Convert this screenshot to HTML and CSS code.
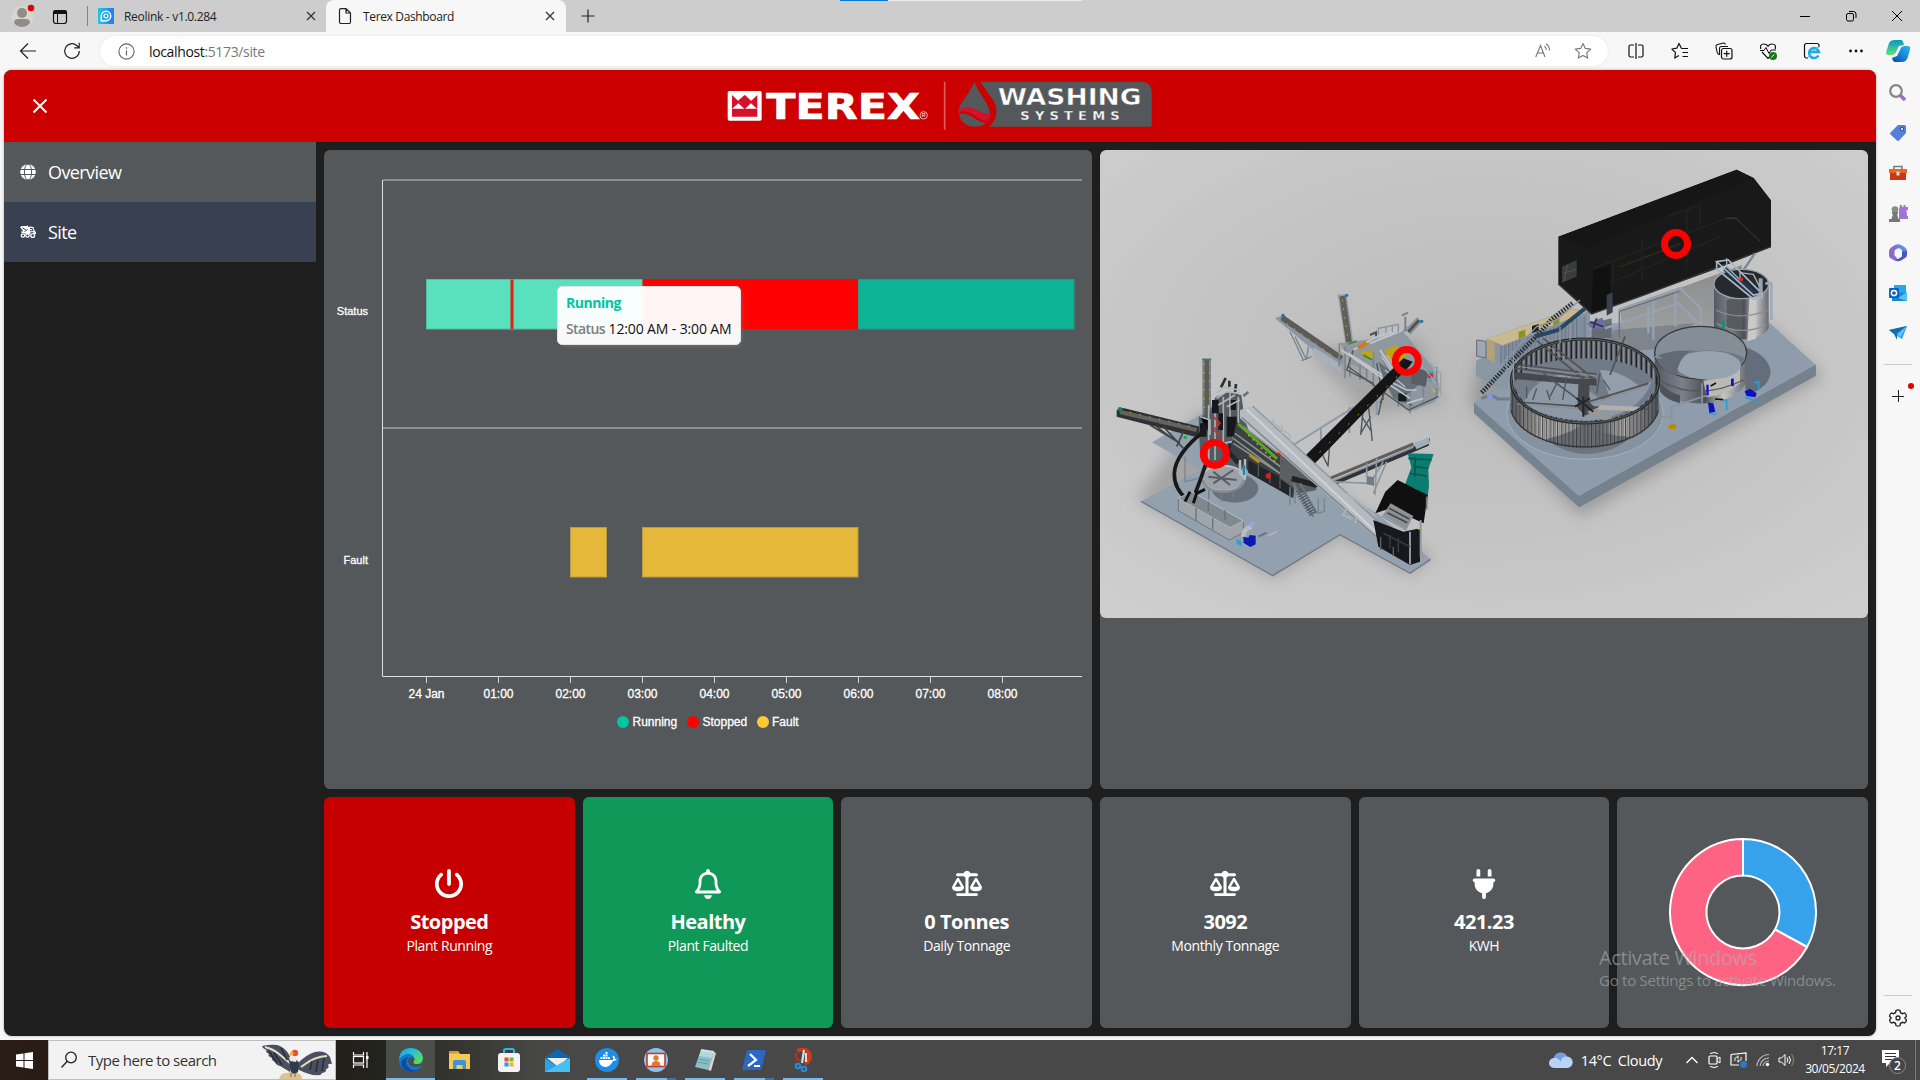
FILE: index.html
```html
<!DOCTYPE html>
<html lang="en">
<head>
<meta charset="utf-8">
<title>Terex Dashboard</title>
<link rel="stylesheet" href="styles.css">
</head>
<body>
<div class="screen">
  <div class="tabbar">
    <svg class="avatar" width="24" height="26" viewBox="0 0 24 26"><circle cx="11.500" cy="14" r="11" fill="#d9d6d1"/><circle cx="11" cy="10" r="5" fill="#908c87"/><path d="M3 20q0-4 4-4h8q4 0 4 4-3 4-8 4t-8-4z" fill="#908c87"/><circle cx="20" cy="5" r="3.300" fill="#e00000"/></svg>
    <svg class="workspaces" width="16" height="16" viewBox="0 0 16 16"><rect x="1.500" y="1.500" width="13" height="13" rx="2.500" fill="none" stroke="#111" stroke-width="1.200"/><path d="M1 5V4a3 3 0 0 1 3-3h8a3 3 0 0 1 3 3v1z" fill="#111"/><path d="M5.500 5v9.500" stroke="#111"/></svg>
    <div class="tab-sep"></div>
    <div class="tab">
      <svg width="16" height="16" viewBox="0 0 16 16"><defs><linearGradient id="reo" x1="0" x2="1"><stop offset="0" stop-color="#1fc8e8"/><stop offset="1" stop-color="#1c7bf2"/></linearGradient></defs><rect width="16" height="16" rx="1" fill="url(#reo)"/><path d="M3.300 13V8a4.700 4.700 0 1 1 4.700 4.700z" fill="none" stroke="#fff" stroke-width="1.500"/><circle cx="8" cy="8" r="2" fill="none" stroke="#fff" stroke-width="1.200"/></svg>
      <span class="tab-title">Reolink - v1.0.284</span>
      <svg width="10" height="10" viewBox="0 0 10 10"><path d="M1 1l8 8M9 1L1 9" stroke="#333" stroke-width="1.200"/></svg>
    </div>
    <div class="tab active">
      <svg width="16" height="16" viewBox="0 0 16 16"><path d="M2.500 2A1.500 1.500 0 0 1 4 .6h5L13.500 5v9a1.500 1.500 0 0 1-1.500 1.500H4A1.500 1.500 0 0 1 2.500 14zM9 .6V5h4.500" fill="none" stroke="#222" stroke-width="1.200"/></svg>
      <span class="tab-title">Terex Dashboard</span>
      <svg width="10" height="10" viewBox="0 0 10 10"><path d="M1 1l8 8M9 1L1 9" stroke="#333" stroke-width="1.200"/></svg>
    </div>
    <svg class="newtab" width="14" height="14" viewBox="0 0 14 14"><path d="M7 .500v13M.500 7h13" stroke="#222" stroke-width="1.200"/></svg>
    <div class="share-strip"></div>
    <div class="win-controls">
      <svg width="12" height="12" viewBox="0 0 12 12"><path d="M1 6.500h10" stroke="#000"/></svg>
      <svg width="12" height="12" viewBox="0 0 12 12"><rect x="1.500" y="3.500" width="7" height="7.500" rx="1.500" fill="none" stroke="#000"/><path d="M4 1.500h4.500a2.500 2.500 0 0 1 2.500 2.500v4" fill="none" stroke="#000"/></svg>
      <svg width="12" height="12" viewBox="0 0 12 12"><path d="M1 1l10 10M11 1L1 11" stroke="#000"/></svg>
    </div>
  </div>

  <div class="toolbar">
    <svg class="back" width="18" height="18" viewBox="0 0 18 18"><path d="M17 9H1.500M9 1.500L1.500 9 9 16.500" fill="none" stroke="#222" stroke-width="1.200"/></svg>
    <svg class="reload" width="18" height="18" viewBox="0 0 18 18"><path d="M16.300 9A7.300 7.300 0 1 1 14 3.700L16 5.500M16.200.800v5h-5" fill="none" stroke="#222" stroke-width="1.200"/></svg>
    <div class="address">
      <svg width="17" height="17" viewBox="0 0 17 17"><circle cx="8.500" cy="8.500" r="7.600" fill="none" stroke="#666" stroke-width="1.100"/><path d="M8.500 7.500v5M8.500 4.300v1.500" stroke="#666" stroke-width="1.200"/></svg>
      <span class="url"><b>localhost</b>:5173/site</span>
      <svg width="16" height="16" viewBox="0 0 16 16"><path d="M.700 14L5.500 2.500 10 14M2.500 10h6M9.500 3q1.800 1.500 1.800 4M11 .800Q14.500 3 14.500 7.500" fill="none" stroke="#777" stroke-width="1.100"/></svg>
      <svg width="18" height="18" viewBox="0 0 18 18"><path d="M9 1.500l2.300 4.900 5.400.700-4 3.700 1 5.300L9 13.500l-4.700 2.600 1-5.300-4-3.700 5.400-.700z" fill="none" stroke="#777" stroke-width="1.100" stroke-linejoin="round"/></svg>
    </div>
    <div class="tools">
      <svg width="18" height="18" viewBox="0 0 18 18"><path d="M7 3H3.500A1.500 1.500 0 0 0 2 4.500v9A1.500 1.500 0 0 0 3.500 15H7M11 3h3.500A1.500 1.500 0 0 1 16 4.500v9a1.500 1.500 0 0 1-1.500 1.500H11M9 1v16" fill="none" stroke="#111" stroke-width="1.200"/></svg>
      <svg width="18" height="18" viewBox="0 0 18 18"><path d="M10.500 6.500L8 1.500 5.800 6.200.900 7l3.600 3.600-.800 5.400L8 13.600M10.500 6.500h6.500M11.500 10.500h5.500M11.500 14.500h5.500" fill="none" stroke="#111" stroke-width="1.200" stroke-linejoin="round"/></svg>
      <svg width="18" height="18" viewBox="0 0 18 18"><path d="M4 12.500Q2.500 12 2.200 10.500L1 5q-.300-2 1.500-2.500L8.500 1q1.500-.200 2 1.500M4.500 13V6.500q0-2 2-2H13" fill="none" stroke="#111" stroke-width="1.100"/><rect x="6.500" y="6.500" width="10.500" height="10.500" rx="2" fill="#f7f7f7" stroke="#111" stroke-width="1.200"/><path d="M11.700 8.800v6M8.700 11.700h6" stroke="#111" stroke-width="1.200"/></svg>
      <svg width="18" height="18" viewBox="0 0 18 18"><path d="M1.800 7Q.500 2 4.800 2 7.500 2 9 4.200 10.500 2 13.200 2q4.300 0 3 5M3 10l6 6.500 2-2" fill="none" stroke="#111" stroke-width="1.200"/><path d="M1 8.500h4l2-3 3 6 2-3.500h5" fill="none" stroke="#111"/><circle cx="14" cy="14" r="4" fill="#107c10"/><path d="M12.300 15.300l3-2.800" stroke="#fff"/></svg>
      <svg width="18" height="18" viewBox="0 0 18 18"><path d="M5 16H3.500A2 2 0 0 1 1.500 14V3.500a2 2 0 0 1 2-2H14a2 2 0 0 1 2 2V5" fill="none" stroke="#111" stroke-width="1.200"/><path d="M15.500 13.500A5 5 0 1 1 16 10H7" fill="none" stroke="#1aa7ea" stroke-width="2.500"/><path d="M5.500 15Q8 9 16.500 4.500" fill="none" stroke="#38bdf2" stroke-width="1.200"/></svg>
      <svg width="18" height="18" viewBox="0 0 18 18"><g fill="#111"><circle cx="3.500" cy="9" r="1.400"/><circle cx="9" cy="9" r="1.400"/><circle cx="14.500" cy="9" r="1.400"/></g></svg>
    </div>
    <svg class="copilot" width="24" height="24" viewBox="0 0 24 24"><defs><linearGradient id="cpa" x1="0" y1="0" x2="0" y2="1"><stop offset="0" stop-color="#0797c8"/><stop offset="1" stop-color="#65df78"/></linearGradient><linearGradient id="cpb" x1="1" y1="0" x2="0" y2="1"><stop offset="0" stop-color="#29bdf4"/><stop offset="1" stop-color="#064cb7"/></linearGradient></defs><path d="M9 1h6q2 0 3 5l-5 1-3 6q-1 3-4 3H3q-4 0-2.500-4L3 4q1.500-3 6-3z" fill="url(#cpa)"/><path d="M16 23H9q-2 0-3-4l5-2 3-6q1-4 5-4h3q3 0 2 4l-2.500 8Q20 23 16 23z" fill="url(#cpb)"/></svg>
  </div>

  <div class="middle">
    <div class="page">
      <header class="header">
        <svg class="close" width="16" height="16" viewBox="0 0 16 16"><path d="M1.500 1.500l13 13M14.500 1.500l-13 13" stroke="#fff" stroke-width="2"/></svg>
        <svg class="logo" width="427" height="50" viewBox="82 64 1281 150">
          <rect x="84" y="94" width="102" height="89" rx="5" fill="#fff"/><path d="M97 106l18 17 20-17 20 17 18-17v65H97z" fill="#d4102a"/><path d="M97 147l19-16 18 16zM136 147l18-16 18 16zM116 123l19-17 19 17-9 8h-20z" fill="#fff"/><path d="M116 123l19-17 19 17-19 18z" fill="#d4102a"/>
          <text class="wide" x="200" y="178" font-size="107" textLength="461" lengthAdjust="spacingAndGlyphs">TEREX</text>
          <circle cx="672" cy="167" r="11" fill="none" stroke="#fff" stroke-width="2"/><text class="reg" x="666" y="173" font-size="16">R</text>
          <path d="M735 66v144" stroke="#e05a56" stroke-width="5"/>
          <path d="M842 66h480q34 0 34 34v101H868q22-18 22-46 0-20-12-36z" fill="#54585a"/>
          <path d="M824 66q-10 24-36 60-14 20-11 34 8 41 49 41 34 0 43-27 5-20-9-45-25-36-36-63z" fill="#54585a"/>
          <path d="M777 151q25-17 53 0 27 14 42 10v10q-9 23-43 7-27-16-52-18z" fill="#d4102a"/><path d="M779 159q23-6 48 14 24 18 43 12" fill="none" stroke="#c00" stroke-width="6"/>
          <text class="wide thin" x="894" y="137" font-size="68" textLength="432" lengthAdjust="spacingAndGlyphs">WASHING</text>
          <text class="wide thin small" x="962" y="181" font-size="39" textLength="298" lengthAdjust="spacing">SYSTEMS</text>
        </svg>
      </header>
      <div class="body">
        <nav class="nav">
          <a class="nav-item"><svg width="16" height="16" viewBox="0 0 16 16"><circle cx="8" cy="8" r="7.800" fill="#fff"/><path d="M0 5.500h16M0 10.500h16" stroke="#54585a"/><ellipse cx="8" cy="8" rx="3.600" ry="8" fill="none" stroke="#54585a"/></svg>Overview</a>
          <a class="nav-item current"><svg width="16" height="16" viewBox="0 0 16 16"><path d="M0 3l2-1h5l1-1v2l2-.500 3.500.500 1.300 4 1.200 1v2h-2a2 2 0 0 0-4 0H7L1 8.500V6.500h2L1 4.500z" fill="#fff"/><g fill="none" stroke="#fff" stroke-width="1.300"><circle cx="3" cy="11.500" r="1.700"/><circle cx="7.500" cy="11.500" r="1.700"/><circle cx="12.700" cy="11.500" r="1.900"/></g><path d="M2.500 4l3 1.500M4.500 7.500l3-2M10 4.500h2.500l.500 2.200h-3M1 7h2" fill="none" stroke="#394150"/></svg>Site</a>
        </nav>
        <main class="grid">
          <section class="panel chart">
            <svg width="768" height="639" viewBox="324 150 768 639">
              <path d="M383 180h699M383 428h699" stroke="#a0a2a3" stroke-width="1.700"/>
              <path d="M382.500 180v496.500H1082" fill="none" stroke="#e0e0e0"/>
              <path d="M426.500 677v6M498.500 677v6M570.500 677v6M642.500 677v6M714.500 677v6M786.500 677v6M858.500 677v6M930.500 677v6M1002.500 677v6" stroke="#d5d6d6"/>
              <rect x="426.500" y="279.500" width="216" height="49.500" fill="#59e1bd" stroke="#52bfa2"/>
              <rect x="510.500" y="279.500" width="3" height="49.500" fill="#e8201a"/>
              <rect x="642.500" y="279" width="216" height="50" fill="#f00"/>
              <rect x="858.500" y="279.500" width="215.500" height="49.500" fill="#0cb395" stroke="#219c86"/>
              <rect x="570.500" y="527.500" width="36" height="49.500" fill="#e5b83a" stroke="#b89b44"/>
              <rect x="642.500" y="527.500" width="215.500" height="49.500" fill="#e5b83a" stroke="#b89b44"/>
              <g class="ylab"><text x="368" y="315">Status</text><text x="368" y="564">Fault</text></g>
              <g class="xlab"><text x="426.500" y="698">24 Jan</text><text x="498.500" y="698">01:00</text><text x="570.500" y="698">02:00</text><text x="642.500" y="698">03:00</text><text x="714.500" y="698">04:00</text><text x="786.500" y="698">05:00</text><text x="858.500" y="698">06:00</text><text x="930.500" y="698">07:00</text><text x="1002.500" y="698">08:00</text></g>
              <circle cx="623" cy="722" r="6" fill="#00c5a2"/><circle cx="693" cy="722" r="6" fill="#f00"/><circle cx="763" cy="722" r="6" fill="#ffc933"/>
              <g class="legend"><text x="632.500" y="726">Running</text><text x="702.500" y="726">Stopped</text><text x="772" y="726">Fault</text></g>
            </svg>
            <div class="tooltip"><div class="tip-title">Running</div><div class="tip-row"><b>Status</b> 12:00 AM - 3:00 AM</div></div>
          </section>

          <section class="panel site">
            <svg class="plant" width="768" height="468" viewBox="0 0 2304 1404">
              <defs>
                <radialGradient id="floor" cx=".5" cy=".45" r=".75"><stop offset="0" stop-color="#bbbbbb"/><stop offset=".55" stop-color="#c5c5c5"/><stop offset="1" stop-color="#cfcfcf"/></radialGradient>
                <linearGradient id="steel" x1="0" x2="1"><stop offset="0" stop-color="#55585c"/><stop offset=".2" stop-color="#bdbab6"/><stop offset=".42" stop-color="#b5b3b0"/><stop offset=".5" stop-color="#6b7078"/><stop offset=".62" stop-color="#777b80"/><stop offset=".75" stop-color="#bfbcb8"/><stop offset="1" stop-color="#4c5057"/></linearGradient>
                <linearGradient id="steel2" x1="0" x2="1"><stop offset="0" stop-color="#555a62"/><stop offset=".3" stop-color="#7b8188"/><stop offset=".55" stop-color="#4c5056"/><stop offset=".75" stop-color="#c6c6c4"/><stop offset="1" stop-color="#666b72"/></linearGradient>
                <linearGradient id="wall" x1="0" x2="0" y1="0" y2="1"><stop offset="0" stop-color="#8b8c8e"/><stop offset="1" stop-color="#a0a1a2"/></linearGradient>
                <pattern id="staves" width="34" height="10" patternUnits="userSpaceOnUse"><path d="M2 0v10M13 0v10M25 0v10" stroke="#35373a" stroke-width="3"/><path d="M7 0v10M19 0v10M30 0v10" stroke="#54585c" stroke-width="1.500"/></pattern>
                <pattern id="ribs" width="15" height="10" patternUnits="userSpaceOnUse"><path d="M4 0v10" stroke="#202226" stroke-width="5"/><path d="M11 0v10" stroke="#9a9c9e" stroke-width="2"/></pattern>
                <filter id="soft" x="-20%" y="-20%" width="140%" height="140%"><feGaussianBlur stdDeviation="22"/></filter>
              </defs>
              <rect width="2304" height="1404" fill="url(#floor)"/>
              <g filter="url(#soft)" opacity=".35"><path d="M1110 760L1440 1100 2170 680 2000 520 1140 620z" fill="#555"/><path d="M110 1050L520 1290 720 1160 930 1275 1000 1220 700 1020 300 780z" fill="#666"/><path d="M620 600L800 800 1030 760 960 560z" fill="#777"/></g>

              <!-- water treatment slab -->
              <path d="M1122 758L1860 500 2040 556 2147 645V677L1437 1072 1122 790z" fill="#758391"/>
              <path d="M1122 758L1500 520 2010 520 2147 645 1437 1039z" fill="#8f9cab"/>
              <path d="M1437 1039L2147 645V677L1437 1072z" fill="#75818d"/>
              <path d="M1128 633l90-45 60 40-70 90-80-40z" fill="#8a97a5"/>
              <path d="M1560 480l366-135-20 200-246 40-90-20z" fill="url(#wall)"/>
              <path d="M1540 540l240-20-30 70-230 20z" fill="#7f858c"/>

              <!-- container -->
              <path d="M1160 566l260-90 50 10v70l-270 90-40-20z" fill="#8895a5"/><path d="M1160 566l258-88 40 8-250 100z" fill="#c9b98e"/><path d="M1160 566v58l24 14v-60z" fill="#b5a274"/><path d="M1130 570l28 4v50l-28-6z" fill="#9ba9b7" stroke="#667" stroke-width="3"/>
              <path d="M1256 545l20-6v20l-20 8zM1360 508l18-6v18l-18 6z" fill="#8c921c"/><path d="M1296 528l20-6v20l-20 8z" fill="#1c2226"/>
              <path d="M1200 590l260-95v65l-260 85z" fill="url(#staves)" opacity=".4"/>

              <!-- press building -->
              <path d="M1375 260L1910 59l52 26 51 66v140L1840 360 1540 468 1475 492 1375 402z" fill="#181918"/>
              <path d="M1375 260L1910 59l52 26-100 40-400 170z" fill="#151615"/><path d="M1480 355l400-150 35 0M1480 420l380-160M1540 330v80M1625 270v120M1760 180v170M1700 200l100-35v60M1500 360v120" fill="none" stroke="#202221" stroke-width="5"/><path d="M1375 402l100 90 160-58L2013 290" fill="none" stroke="#343636" stroke-width="4"/>
              <path d="M1560 350l180-68" stroke="#2b2620" stroke-width="6"/>
              <path d="M1386 350l44-20v50l-44 18z" fill="#3a3b3c"/><path d="M1390 370l40-12M1402 344l-10 50" stroke="#555" stroke-width="3"/>
              <path d="M1480 360l50-15v122l-55 22z" fill="#101110"/><path d="M1520 435l18-8v60l-18 10z" fill="#39424c"/><path d="M1880 205q28-5 38 10l62 58" fill="none" stroke="#3c3f41" stroke-width="3"/>
              <path d="M1965 310l-45 65" stroke="#7e8894" stroke-width="7"/>
              <path d="M1475 520l60-15v60h-60z" fill="#5a5f67" opacity=".8"/><path d="M1462 520l45-17 12 30-40 8z" fill="#6a6fa0"/><path d="M1470 515l40 15M1490 505l-10 30" stroke="#2c3150" stroke-width="5"/>
              <path d="M1555 480l185-66 62 60v80M1515 535l220-75 60 60M1660 450v120M1726 420v110M1645 470v80" fill="none" stroke="#98a3b0" stroke-width="7"/>
              <path d="M1558 484v80M1558 484l180-60" fill="none" stroke="#68727e" stroke-width="4"/>

              <!-- tall tank -->
              <path d="M1842 395v140a85 45 0 0 0 164 0V395z" fill="url(#steel2)"/><path d="M1880 450q20-8 40 5v90l-40-10z" fill="#565b62"/><path d="M1948 440l20-4v130l-26 8z" fill="#c9c9c7"/><ellipse cx="1924" cy="402" rx="82" ry="44" fill="#262a2e" stroke="#9aa3ac" stroke-width="4"/>
              <path d="M1848 480q70 35 156 0M1850 520q70 40 150 5" fill="none" stroke="#8d8c8b" stroke-width="4"/>
              <path d="M1875 355l90 80" stroke="#23394d" stroke-width="16"/><path d="M1850 335l110 100 25-5-100-100zM1850 335v22l110 90 26-5v-18" fill="none" stroke="#a5b6c7" stroke-width="5"/><path d="M1880 325v25l40 40v-22l40 5 20 40" fill="none" stroke="#a4b1bd" stroke-width="4"/><circle cx="1924" cy="388" r="6" fill="#d22"/><path d="M1982 385v45" stroke="#9aa4ae" stroke-width="12"/><path d="M1996 400h18v110" fill="none" stroke="#9fabb6" stroke-width="8"/><path d="M1866 512l8 0v22l-8 2z" fill="#0d8f78"/>

              <!-- shallow tank -->
              <path d="M1930 590q70 20 82 70 0 55-75 75z" fill="#5c6671" opacity=".85"/>
              <path d="M1664 610v75a138 78 0 0 0 276-5V605z" fill="url(#steel2)"/><path d="M1680 700q30 30 60 36v24q-40-10-60-35z" fill="#4e535b"/><path d="M1810 692q70-8 110-40v48q-40 36-100 42z" fill="#bcb9b5"/><path d="M1686 695q110 60 245-5" fill="none" stroke="#55585c" stroke-width="4"/>
              <ellipse cx="1802" cy="608" rx="138" ry="79" fill="#858d97" stroke="#34383c" stroke-width="4"/><path d="M1668 622a138 79 0 0 0 268 5q-40-30-140-25-80-5-128 20z" fill="#6f7882"/><ellipse cx="1825" cy="646" rx="98" ry="43" fill="#98a3b0"/><path d="M1730 672q5-45 40-69-60-4-104 17 10 38 64 57z" fill="#626a73"/>

              <!-- thickener -->
              <ellipse cx="1455" cy="790" rx="235" ry="138" fill="#8593a1" stroke="#a5b0bc" stroke-width="3"/>
              <path d="M1232 700v82a224 130 0 0 0 444 0V695z" fill="url(#steel)"/>
              <path d="M1338 868q80-20 115-48 60 40 140 40-50 50-138 52-60 0-117-44z" fill="#70757b"/>
              <path d="M1232 700v82a224 130 0 0 0 444 0V695z" fill="url(#staves)"/>
              <path d="M1233 782a224 130 0 0 0 442 0" fill="none" stroke="#34363a" stroke-width="4"/>
              <ellipse cx="1455" cy="693" rx="219" ry="124" fill="#6b737e"/>
              <ellipse cx="1455" cy="693" rx="217" ry="122" fill="url(#ribs)"/>
              <path d="M1242 705q20-75 213-80 180 5 212 80-30 100-212 108-183-8-213-108z" fill="#717b87"/>
              <path d="M1270 760q30-75 125-90l110 80 150-55q-40 105-190 117-130-5-195-52z" fill="#8c98a6"/><path d="M1500 660q60 0 120 50l-90 35z" fill="#929eac"/>
              <path d="M1240 665l190 22 60 0v20l-250-20z" fill="#45484c"/>
              <path d="M1240 642l250 30M1245 655l240 30M1330 565l150 120M1310 572l140 115M1250 756l200 14 200 8M1450 760l195-60M1450 760l-120-90M1450 765l80 45M1530 675l45-115" fill="none" stroke="#505255" stroke-width="5"/><path d="M1240 648l250 30M1320 568l145 117M1250 762l200 16M1450 768l195-62" fill="none" stroke="#8b8b8a" stroke-width="3"/><path d="M1436 690h32v65l20 22-32 20-24-24z" fill="#46484b"/><path d="M1400 680l-12 70M1500 670l-10 60M1280 710v35M1310 715l-12 35M1340 720l10 30M1370 700l-20 40M1510 690l20 30" stroke="#505459" stroke-width="4"/><path d="M1500 765l120 5v14l-130-5z" fill="#b2b0ad"/><path d="M1460 785l60 32 30-5-60-37z" fill="#999793"/><path d="M1425 770l45-25M1430 745l50 40M1450 740v60" stroke="#232527" stroke-width="6"/>
              <ellipse cx="1455" cy="693" rx="221" ry="126" fill="none" stroke="#27292b" stroke-width="9"/><ellipse cx="1455" cy="693" rx="221" ry="126" fill="none" stroke="#77797a" stroke-width="2"/>
              <path d="M1145 728l100-105 60-60 50-55 65-50" fill="none" stroke="#2a3037" stroke-width="14" stroke-dasharray="5 4"/><path d="M1305 560l70-20 80-65" fill="none" stroke="#29465f" stroke-width="12"/><path d="M1150 700l160-170 60-20 70-60M1240 600v90M1220 620v100M1380 530v50M1410 520v50M1440 500v60" fill="none" stroke="#8796a5" stroke-width="4"/>
              <path d="M1144 745l30-10 20 12h40" fill="none" stroke="#707d8a" stroke-width="9"/><circle cx="1170" cy="738" r="9" fill="#8f92dc"/>
              <path d="M1665 620l20 4M1715 770l110-35M1715 770v40M1680 800h35M1806 700v65" fill="none" stroke="#87939f" stroke-width="5"/><path d="M1704 828l14-8 12 8-4 9h-20z" fill="#b18d08"/>
              <path d="M1824 758l16 2 6 25-18 4zM1934 724l16-8 20 14-4 12-26-4zM1893 688l8-4v26l-8-4zM1819 704h7v32h-7z" fill="#0b10c5"/><path d="M1828 792h22M1880 780v-30h-12M1935 742l34 10M1976 720v-25l-14 2" fill="none" stroke="#279fd6" stroke-width="5"/><path d="M1845 747l24 2M1832 708l16-9" stroke="#111" stroke-width="5"/>

              <!-- second screening unit -->
              <path d="M525 505l24-10 184 130-6 42-22-12z" fill="#8b97a4"/><path d="M545 502l180 124" stroke="#5e5b57" stroke-width="17"/><path d="M540 506l186 130" stroke="#c1b44a" stroke-width="3" stroke-dasharray="4 22"/><path d="M640 590l85 55v25l-85-55z" fill="#a8b1bb"/><path d="M570 545l40 85M585 560l35 70M625 590l-5 35M605 632l30-12" stroke="#768593" stroke-width="4"/>
              <path d="M712 433h28l20 142-24 5z" fill="#97a1ac"/><path d="M727 438l20 140" stroke="#625f5b" stroke-width="18"/><path d="M727 450l18 125" stroke="#d2bf30" stroke-width="3" stroke-dasharray="4 22"/><circle cx="740" cy="436" r="5" fill="#187ba2"/><circle cx="549" cy="496" r="5" fill="#187ba2"/>
              <path d="M720 580l120-15 70-20 90 110 20 60-15 40-75 30-50-40-35-70-90-30z" fill="#8f979f"/>
              <path d="M718 580v70M735 590v95M750 610v70M780 640v50M800 650v45M820 610v100M850 630l60 140M895 690v80M930 720v70M970 680v80M1010 650v90" stroke="#7b858e" stroke-width="5"/><path d="M745 650l180 130 90-40M760 600l-20 60 80 40M830 640l20 110" fill="none" stroke="#4d5359" stroke-width="4"/><path d="M745 610l180 115M725 600l195 135M760 600l70-40 60-20M810 580l100-40M840 600l60 90" fill="none" stroke="#c0c5ca" stroke-width="6"/><path d="M770 590l25-16 10 8-25 16z" fill="#dd7519"/><path d="M780 605l34-5 6 22-20 6zM855 600l35-15 26 30-10 35-40-20z" fill="#bda517"/><path d="M745 582l25-9M790 615l25 14" stroke="#2b8b38" stroke-width="5"/>
              <path d="M835 635l55 40 40-10 25 40-35 30 20 35-60-25-30-60z" fill="#666e76"/><path d="M845 620l40 60M860 615l40 60M855 660l60 50" stroke="#b7bfc7" stroke-width="4"/><path d="M895 730h24v24h-24z" fill="#16181a"/><path d="M880 700l40 20h30M870 705l60 40M920 760l50-15" fill="none" stroke="#bbc5cf" stroke-width="5"/>
              <path d="M835 555v-20l60-12v25M890 560l65-55M858 550v-18M877 546v-18" fill="none" stroke="#89949f" stroke-width="4"/><path d="M918 540l32-38 16 14-34 38z" fill="#8b959f"/><path d="M925 545l32-34" stroke="#55524e" stroke-width="9"/><circle cx="965" cy="514" r="5" fill="#1777a7"/><path d="M916 500v45M906 496l18-8" stroke="#7a8086" stroke-width="6"/><path d="M810 555l18-8v12" stroke="#4c5157" stroke-width="6" fill="none"/>
              <path d="M940 650l45 15-8 45-45-10z" fill="#5a5e64"/><path d="M984 670h15v14h-15z" fill="#e01a1e"/><path d="M985 664h14v6h-14zM988 686h8v10h-8z" fill="#1dafd0"/><path d="M990 640l32 30v65M995 690l25 30M960 640l50 60" fill="none" stroke="#97a3ad" stroke-width="4"/><path d="M995 718l12 8" stroke="#d2b01a" stroke-width="5"/>

              <!-- feed conveyor -->
              <path d="M580 885l200-125 60-25M663 830v50M748 770v80M830 740v56" fill="none" stroke="#8d9aa7" stroke-width="6"/>
              <path d="M790 775l-8 80M805 765l12 108M785 800l30 45M812 800l-30 50M660 900l25 50M690 870l-6 80M650 930l40-40M850 730l-15 65M840 760l30-70" stroke="#505458" stroke-width="4"/>
              <path d="M615 918L910 625l28 10-10 14L645 940l-30-10z" fill="#151515"/><path d="M630 935l285-278" stroke="#b9ad1b" stroke-width="3" stroke-dasharray="5 35"/>

              <!-- washing plant slab -->
              <path d="M123 1054L300 960 156 877 310 790 830 1090 992 1228 930 1270 720 1154 518 1277z" fill="#93a0ae"/><path d="M123 1054l395 223 202-123 210 116 62-42" fill="none" stroke="#6f7984" stroke-width="4"/>
              <ellipse cx="405" cy="1015" rx="70" ry="43" fill="#67717c"/>
              <path d="M307 628h26v180h-26z" fill="#79818a"/><path d="M320 630v170" stroke="#5e5b56" stroke-width="14"/><path d="M313 640v150M329 640v150" stroke="#d4c41a" stroke-width="3" stroke-dasharray="4 22"/><path d="M306 628h28" stroke="#287" stroke-width="5"/>
              <path d="M50 780l20-6 230 56v34L50 800z" fill="#2d3136"/><path d="M60 786l230 54" stroke="#66635f" stroke-width="12"/><path d="M60 780l230 54" stroke="#c9bd27" stroke-width="3" stroke-dasharray="4 26"/><path d="M150 825l90 55M170 830l50 38M190 830l60 65M250 845l-20 45" stroke="#41454a" stroke-width="5"/><circle cx="60" cy="778" r="7" fill="#16815f"/><circle cx="256" cy="862" r="5" fill="#16b01f"/>
              <path d="M296 800l30-8 20-50 40-18 38 12 10 70 20 60-10 75-60 50-60-40-24-40z" fill="#555a60"/><path d="M326 765v190M345 760v170M370 740v150M390 730v130M415 740v90M300 800l30 10v45" stroke="#a9b1b9" stroke-width="5"/><path d="M336 750h20v40h-20zM380 800h30v60h-30zM300 820h20v40h-20zM355 790h14v50h-14zM392 750h16v30h-16z" fill="#16181b"/><path d="M340 800l20 20-18 20 20 20M345 870l12 30" fill="none" stroke="#d02b2b" stroke-width="5"/><path d="M363 712l14-28M388 710v-18M405 728l3-26" stroke="#2c3033" stroke-width="8"/><path d="M430 738l15-12" stroke="#6c7176" stroke-width="8"/><path d="M350 745l30-20 40 5M355 765l50-30M380 770l40-20M350 730l20-18 50 8M370 880l50-10M400 860v60" stroke="#b2b7bb" stroke-width="5" fill="none"/><path d="M385 880l35 5 10 35-20 25-25-30z" fill="#24272b"/>
              <path d="M410 815l180 140-10 90-130-75-60-70z" fill="#3b4045"/><path d="M405 850l150 110M400 865l160 120M430 830l130 100M400 880l140 90" stroke="#8b908f" stroke-width="5"/><path d="M415 822l116 104" stroke="#58a821" stroke-width="9"/><path d="M445 855l85 85" stroke="#b4ac2d" stroke-width="5" stroke-dasharray="5 13"/><path d="M448 915l30 22" stroke="#b98e17" stroke-width="8"/>
              <path d="M445 930l130 70v42l-130-74z" fill="#22252a"/><path d="M475 945v35M510 965v35M540 980v35" stroke="#555" stroke-width="4"/><circle cx="505" cy="978" r="8" fill="#e01c1c"/><path d="M535 903l14 3-4 12-14-3z" fill="#d11"/>
              <path d="M540 920l30-10 60 60 20 50-50 10-60-45z" fill="#5b5f62"/><path d="M575 985l70 20 50-15" fill="none" stroke="#222" stroke-width="16"/><path d="M580 1000l60 100M600 1000l50 90" stroke="#6e7780" stroke-width="6"/><path d="M595 1020l45 75" stroke="#4f5963" stroke-width="24" stroke-dasharray="4 4"/>
              <path d="M570 1010v55M585 1010v50M655 1045v45l18-6v-40" fill="none" stroke="#7a848e" stroke-width="4"/>
              <path d="M660 1010l280-120 50-25-4 22-310 130z" fill="#303338"/><path d="M690 985l250-103" stroke="#625e59" stroke-width="9"/><path d="M700 992l240-100M690 995l120 5M810 1000l40-65M820 1030l40-95M800 940v40M830 925l-5 110" fill="none" stroke="#8b96a1" stroke-width="5"/><path d="M940 880l46-18 4 18-40 18z" fill="#a5afb8"/><path d="M800 978l22 4v25l-22-4z" fill="#737b83"/>
              <path d="M420 780l38-12 400 370-4 40-22-10L420 805z" fill="#b4babf"/><path d="M440 778l395 375" stroke="#cdd1d4" stroke-width="7"/><path d="M425 802l405 360" stroke="#7a8289" stroke-width="4"/><path d="M458 768l400 370" stroke="#8d959d" stroke-width="4"/><path d="M500 805l70 50v22M520 805v30M545 825v30" fill="none" stroke="#a8b1ba" stroke-width="4"/><path d="M740 1075l-12 20 30 12M770 1100l-5 20M740 1030l90 70" fill="none" stroke="#a8b2bb" stroke-width="6"/>

              <!-- cyclone sump, launder and pipes -->
              <ellipse cx="370" cy="985" rx="64" ry="38" fill="#9ca2a8" stroke="#c0c6cb" stroke-width="5"/><path d="M308 990q10 35 62 35t62-35" fill="none" stroke="#848b92" stroke-width="8"/><path d="M325 980l85 10M340 965l50 40M400 960l-60 40" stroke="#555c63" stroke-width="6"/><path d="M326 1020v28M365 1030v25M400 1020v20" stroke="#757e87" stroke-width="4"/>
              <path d="M316 840q-90 70-93 130-2 45 40 80M320 935q-20 60-40 110" fill="none" stroke="#17191b" stroke-width="11"/><path d="M255 920v75l40-10" fill="none" stroke="#7a858f" stroke-width="4"/><path d="M420 930v40l15 12v-55" fill="none" stroke="#b6bcc1" stroke-width="7"/><path d="M432 945v30" stroke="#168cab" stroke-width="7"/>
              <path d="M235 1045l155 88 40-20v35l-42 22-153-88z" fill="#9ea5ab" stroke="#6c757d" stroke-width="3"/><path d="M235 1045l40-20 155 88-40 20z" fill="#808890" stroke="#b8bfc5" stroke-width="3"/><path d="M288 1075v38M338 1103v35M375 1080v30M325 1055v30" stroke="#67717b" stroke-width="4"/><path d="M255 1055l15-30M280 1060l10-30 25-12" fill="none" stroke="#0f1113" stroke-width="9"/>
              <path d="M430 1160q0-25 25-30" fill="none" stroke="#b8bdc2" stroke-width="14"/><circle cx="455" cy="1123" r="8" fill="#9ca1e6"/><path d="M430 1160l15 3 4-8 18 2v26l-16 8-20-12z" fill="#0a1ab5"/><path d="M410 1168l14 6v14l-14-6z" fill="#27a1d5"/><path d="M475 1160l25-12" stroke="#6a737c" stroke-width="6"/><path d="M505 1158l26-14" stroke="#b0b7be" stroke-width="5"/>

              <!-- hopper -->
              <path d="M923 910l78 2-16 45 2 50-8 70-30-60-35-10 20-55z" fill="#0a7c70"/><path d="M925 925l70 5M940 950l45 5M930 970l50 8M945 920v60" stroke="#07594f" stroke-width="5"/>
              <path d="M893 990l90 45-12 85-100-45-45 15 30-65z" fill="#101010"/><path d="M872 1060l68 38-20 40-72-42z" fill="#8c9298"/><path d="M868 1075l60 32M862 1088l60 30" stroke="#42474b" stroke-width="5"/><path d="M820 1110l90 35 50-10v100l-30 10-95-55z" fill="#17191c"/><path d="M845 1098l75 42M930 1145v98M962 1110v110" fill="none" stroke="#8d98a2" stroke-width="6"/><path d="M842 1160v40M880 1190v28" stroke="#5a6168" stroke-width="4"/><path d="M870 1155v40M895 1165v42M850 1150l80 40" stroke="#353a44" stroke-width="5"/><circle cx="956" cy="1135" r="4" fill="#e2ca1c"/><path d="M980 1040v38" stroke="#73797f" stroke-width="5"/>

              <g fill="none" stroke="#f00" stroke-width="21"><circle cx="344.500" cy="912" r="34.500"/><circle cx="920.500" cy="633" r="34.500"/><circle cx="1728" cy="282" r="34.500"/></g>
            </svg>
          </section>

          <section class="card stopped"><svg width="30" height="30" viewBox="0 0 512 512"><path d="M288 32c0-17.700-14.300-32-32-32s-32 14.300-32 32V256c0 17.700 14.300 32 32 32s32-14.300 32-32V32zM143.500 120.600c13.600-11.300 15.400-31.500 4.100-45.100s-31.500-15.400-45.100-4.100C49.700 115.400 16 181.800 16 256c0 132.500 107.500 240 240 240s240-107.500 240-240c0-74.200-33.800-140.600-86.600-184.600c-13.600-11.300-33.800-9.400-45.100 4.100s-9.400 33.800 4.100 45.100c38.900 32.300 63.500 81 63.500 135.400c0 97.200-78.800 176-176 176s-176-78.800-176-176c0-54.400 24.700-103.100 63.500-135.400z"/></svg><h2>Stopped</h2><p>Plant Running</p></section>
          <section class="card healthy"><svg width="30" height="30" viewBox="-32 0 512 512"><path d="M224 0c-17.700 0-32 14.300-32 32V49.900C119.500 61.400 64 124.200 64 200v33.400c0 45.400-15.500 89.500-43.800 124.900L5.300 377c-5.800 7.200-6.900 17.100-2.900 25.400S14.800 416 24 416H424c9.200 0 17.600-5.300 21.600-13.600s2.900-18.200-2.900-25.400l-14.900-18.600C399.500 322.900 384 278.800 384 233.400V200c0-75.800-55.500-138.600-128-150.100V32c0-17.700-14.300-32-32-32zm0 96h8c57.400 0 104 46.600 104 104v33.400c0 47.900 13.900 94.600 39.700 134.600H72.300C98.100 328 112 281.300 112 233.400V200c0-57.400 46.600-104 104-104h8zm64 352H224 160c0 17 6.700 33.300 18.700 45.300s28.300 18.700 45.300 18.700s33.300-6.700 45.300-18.700s18.700-28.300 18.700-45.300z"/></svg><h2>Healthy</h2><p>Plant Faulted</p></section>
          <section class="card"><svg width="30" height="30" viewBox="0 0 30 30"><path d="M5.500 4.200h6A3.700 3.700 0 0 1 18.500 4.200h6a1.500 1.500 0 0 1 0 3h-6.300l-1.700 1.500V24.200h8a1.400 1.400 0 0 1 0 2.800h-19a1.400 1.400 0 0 1 0-2.800h8V8.700l-1.700-1.500H5.500a1.500 1.500 0 0 1 0-3z"/><path fill-rule="evenodd" d="M6 8.800q.800 0 1.300.900L12 18q0 4.300-6 4.300T0 18l4.700-8.300Q5.200 8.800 6 8.800zm0 3.400L2.900 17.700h6.200zM24 8.800q.800 0 1.300.900L30 18q0 4.300-6 4.300T18 18l4.700-8.300q.500-.900 1.300-.900zm0 3.400l-3.100 5.500h6.200z"/></svg><h2>0 Tonnes</h2><p>Daily Tonnage</p></section>
          <section class="card"><svg width="30" height="30" viewBox="0 0 30 30"><path d="M5.500 4.200h6A3.700 3.700 0 0 1 18.500 4.200h6a1.500 1.500 0 0 1 0 3h-6.300l-1.700 1.500V24.200h8a1.400 1.400 0 0 1 0 2.800h-19a1.400 1.400 0 0 1 0-2.800h8V8.700l-1.700-1.500H5.500a1.500 1.500 0 0 1 0-3z"/><path fill-rule="evenodd" d="M6 8.800q.800 0 1.300.900L12 18q0 4.300-6 4.300T0 18l4.700-8.300Q5.200 8.800 6 8.800zm0 3.400L2.900 17.700h6.200zM24 8.800q.800 0 1.300.900L30 18q0 4.300-6 4.300T18 18l4.700-8.300q.500-.900 1.300-.900zm0 3.400l-3.100 5.500h6.200z"/></svg><h2>3092</h2><p>Monthly Tonnage</p></section>
          <section class="card"><svg width="30" height="30" viewBox="-64 0 512 512"><path d="M96 0C78.300 0 64 14.300 64 32v96h64V32c0-17.700-14.300-32-32-32zM288 0c-17.700 0-32 14.300-32 32v96h64V32c0-17.700-14.300-32-32-32zM32 160c-17.700 0-32 14.300-32 32s14.300 32 32 32v32c0 77.400 55 142 128 156.800V480c0 17.700 14.300 32 32 32s32-14.300 32-32V412.800C297 398 352 333.400 352 256V224c17.700 0 32-14.300 32-32s-14.300-32-32-32H32z"/></svg><h2>421.23</h2><p>KWH</p></section>
          <section class="card pie"><svg width="150" height="150" viewBox="-75 -75 150 150"><g stroke="#fff" stroke-width="2" stroke-linejoin="round"><path d="M0-73A73 73 0 0 1 64.100 35L32 17.500A36.500 36.500 0 0 0 0-36.500z" fill="#36a2eb"/><path d="M64.100 35A73 73 0 1 1 0-73V-36.500A36.500 36.500 0 1 0 32 17.500z" fill="#ff6384"/></g></svg></section>
        </main>
      </div>
    </div>
    <aside class="edge-bar">
      <svg width="20" height="20" viewBox="0 0 20 20"><circle cx="8" cy="8" r="5.800" fill="none" stroke="#858585" stroke-width="2.200"/><path d="M12.500 12.500l4.500 4.500" stroke="#9a6bd6" stroke-width="3.500"/></svg>
      <svg width="20" height="20" viewBox="0 0 20 20"><path d="M10 2h6.500q1.500 0 1.500 1.500V10l-7 7.500q-1 1-2 0L2.500 11.500q-1-1 0-2z" fill="#557fd8"/><circle cx="14" cy="6" r="1.700" fill="#d8e7ff" stroke="#244f9b"/></svg>
      <svg width="20" height="20" viewBox="0 0 20 20"><path d="M6 6V3.500h8V6" fill="none" stroke="#7a7a7a" stroke-width="1.600"/><path d="M1 6h18v4H1z" fill="#e8642a"/><path d="M2 10h16v7H2z" fill="#c8390f"/><rect x="8.500" y="8.500" width="3" height="4" fill="#ddd"/></svg>
      <svg width="20" height="20" viewBox="0 0 20 20"><path d="M12 2h2v2h1.500V2h2v2H20V7h-1.500l.500 6h1v3h-9V7z" fill="#a174d8"/><circle cx="7" cy="6.500" r="3.300" fill="#8b8b8b"/><path d="M4 9h6v2H9l1.500 5H12v3H1v-3h2.500L5 11H4z" fill="#777"/></svg>
      <svg width="20" height="20" viewBox="0 0 20 20"><path d="M7 2q3-1.500 6 0l4 2.500q2 1 2 3.500v3l-5-2.500q0-2-2-3T7.500 7z" fill="#5f8be8"/><path d="M7 2L3 4.500Q1 6 1 8.500v4q0 2 2 3l3 1.500q3 .500 3-2l-2-2V7l4-3z" fill="#8d6ad0"/><path d="M19 8v4q0 2-2 3l-4 2.500q-3 1.500-6 0l-2-1 5-.500 4-2.500v-5z" fill="#4b57bd"/><path d="M6.500 7.500L10 5.500l3.800 2.200v4.600L10 14.500l-3.500-2z" fill="#f7f7f7"/></svg>
      <svg width="20" height="20" viewBox="0 0 20 20"><rect x="6" y="2" width="12" height="11" fill="#28a8ea"/><path d="M4 9l15 1v8H4z" fill="#1687d6"/><path d="M19 9l-9 6 9 3z" fill="#55c3f3"/><rect x="1" y="5" width="10" height="10" rx="1" fill="#0764b8"/><circle cx="6" cy="10" r="2.600" fill="none" stroke="#fff" stroke-width="1.500"/></svg>
      <svg width="20" height="20" viewBox="0 0 20 20"><path d="M1 7l18-4-5 13-5-3z" fill="#239ce3"/><path d="M1 7l18-4-10 8v6l-3-6z" fill="#156cac"/><path d="M9 11l10-8-7 12z" fill="#5bc5f5"/></svg>
      <hr>
      <div class="add"><svg width="14" height="14" viewBox="0 0 14 14"><path d="M7.500 1v12M1 7.500h12" stroke="#222"/></svg><i></i></div>
      <hr class="low">
      <svg class="gear" width="20" height="20" viewBox="0 0 20 20"><path d="M8 2.500q2-1.300 4 0l.500 2.200 2 1 2.200-.700q1.700 1.200 1.700 3.300L16.800 10l1.600 1.700q0 2.100-1.700 3.300l-2.200-.700-2 1-.500 2.200q-2 1.300-4 0l-.500-2.200-2-1-2.200.700q-1.700-1.200-1.700-3.300L3.200 10 1.600 8.300Q1.600 6.200 3.300 5l2.200.700 2-1z" fill="none" stroke="#222" stroke-width="1.300"/><circle cx="10" cy="10" r="2" fill="none" stroke="#222" stroke-width="1.300"/></svg>
    </aside>
  </div>

  <footer class="taskbar">
    <div class="start"><svg width="17" height="17" viewBox="0 0 17 17"><path d="M0 2.500L7.500 1.400V8H0zM8.500 1.200L17 0v8H8.500zM0 9h7.500v6.600L0 14.500zM8.500 9H17v8L8.500 15.800z" fill="#fff"/></svg></div>
    <div class="search">
      <svg width="18" height="18" viewBox="0 0 18 18"><circle cx="11" cy="6.500" r="5.300" fill="none" stroke="#222" stroke-width="1.300"/><path d="M7.200 10.300L1.500 16.500" stroke="#222" stroke-width="1.300"/></svg>
      <span>Type here to search</span>
      <svg class="bird" width="72" height="35" viewBox="0 0 72 35"><path d="M18 35q2-7 8-6 6-2 10 0 5 1 5 6z" fill="#dcc48c"/><path d="M32 19Q26 3 16 1 10 0 1 2q1 3 5 4-3 1 2 4-2 2 3 4-1 2 3 4 1 3 5 4l10 6zM36 20Q46 10 54 8q10-2 15 5l2 7q-3-1-4 1 2 3-2 4 1 3-4 4-1 3-5 2-6 1-20-6z" fill="#4a5060"/><path d="M4 3q8 2 14 7t12 10M66 12Q54 12 40 23" fill="none" stroke="#e5dfc2" stroke-width="2"/><path d="M8 7l8 12M13 9l8 12M20 4l6 12M63 14l-2 13M57 15l-2 13M51 17l-2 9" stroke="#272c39" stroke-width="1.500"/><path d="M28 17q6-5 10 2l-1 9q-4 3-7 0z" fill="#33384a"/><path d="M28 13q5-1 8 2l-1 3-6-1z" fill="#e9e5ee"/><circle cx="34" cy="9" r="3.200" fill="#e3503c"/><path d="M31 7q-3 2-2 5l4-2z" fill="#f3b52b"/><path d="M30 29v4M34 29v4" stroke="#8d5d50"/></svg>
    </div>
    <div class="apps">
      <div class="app view"><svg width="18" height="18" viewBox="0 0 18 18"><path d="M1.500 1v3h10V1M1.500 17v-3h10v3M15 1v16" fill="none" stroke="#fff" stroke-width="1.200"/><rect x="1.500" y="5.500" width="10" height="6.500" fill="none" stroke="#fff" stroke-width="1.200"/><rect x="14" y="5" width="2.500" height="3" fill="#fff"/></svg></div>
      <div class="app on"><svg width="24" height="24" viewBox="0 0 24 24"><defs><linearGradient id="ed" x1="0" x2="1" y1="0" y2=".7"><stop offset="0" stop-color="#1b9de2"/><stop offset=".5" stop-color="#28c4cf"/><stop offset="1" stop-color="#62dc47"/></linearGradient></defs><circle cx="12" cy="12" r="12" fill="#1377cf"/><path d="M0 11Q1 0 12 0q11 1 12 10-1 7-8 6-3-1-1-3 2-3-2-6Q7 4 0 11z" fill="url(#ed)"/><path d="M9 9q-4 6 1 11 5 4 11 0-4 4-9 4-8-1-10-8 0-5 7-7z" fill="#0b4ba2"/><path d="M12 9q-3 1-3 4 1 6 8 6 3 0 6-2 1 0 1-1V14q-2 3-8 2-3-1-1-3 1-3-3-4z" fill="#4b4e4a"/></svg></div>
      <div class="app"><svg width="23" height="20" viewBox="0 0 23 20"><path d="M1 1h9l2 3h10v15H1z" fill="#f6ca55"/><path d="M1 1h8l1.500 2.500H1z" fill="#d9972a"/><path d="M5 19v-7q0-2 2-2h9q2 0 2 2v7h-3.500v-4h-6v4z" fill="#3c94df"/></svg></div>
      <div class="app"><svg width="24" height="24" viewBox="0 0 24 24"><path d="M7 6V2.500Q7 1 9 1h6q2 0 2 1.500V6" fill="none" stroke="#35b4e8" stroke-width="2"/><rect x="1" y="5" width="22" height="19" rx="3" fill="#f3f3f3"/><path d="M7.500 9.500h4v4h-4z" fill="#e2502a"/><path d="M12.500 9.500h4v4h-4z" fill="#7ab829"/><path d="M7.500 14.500h4v4h-4z" fill="#2299e2"/><path d="M12.500 14.500h4v4h-4z" fill="#f5b61e"/></svg></div>
      <div class="app"><svg width="25" height="24" viewBox="0 0 25 24"><path d="M0 9L12.500 1 25 9v15H0z" fill="#1066ae"/><path d="M2 10h21l-10 9z" fill="#eee"/><path d="M0 10l12.500 9L25 10v14H0z" fill="#2aa3e5"/><path d="M0 24L25 10v14z" fill="#46bff3"/></svg></div>
      <div class="app run"><svg width="24" height="24" viewBox="0 0 24 24"><circle cx="12" cy="12" r="12" fill="#1d8de8"/><path d="M4 12h14q1-3-1-4 3-1 3 3h2q-1 2-4 2-3 6-8 6-6-1-6-7zM5.500 9h2v2h-2zM8 9h2v2H8zM10.500 9h2v2h-2zM13 9h2v2h-2zM8 6.500h2v2H8zM10.500 6.500h2v2h-2zM10.500 4h2v2h-2z" fill="#fff"/></svg></div>
      <div class="app run more"><svg width="24" height="24" viewBox="0 0 24 24"><circle cx="12" cy="12" r="12" fill="#8fc4e8"/><rect x="3" y="5.500" width="18" height="13" fill="#fff" stroke="#c6382e" stroke-width="1.600"/><circle cx="12" cy="10" r="2.700" fill="#e4782e"/><path d="M7.500 18q0-5 4.500-5t4.500 5z" fill="#e4782e"/></svg></div>
      <div class="app run"><svg width="24" height="24" viewBox="0 0 24 24"><path d="M8 2l13 2-6 18-13-3z" fill="#8abfc7"/><path d="M8 2l13 2-2 6-13-2z" fill="#aed9df"/><path d="M21 4l2 1-5 18-3-1z" fill="#d9d5cc"/><path d="M8 2l13 2" stroke="#ddd" stroke-width="2"/><path d="M6 11l10 2M5 14l10 2" stroke="#669ca5"/></svg></div>
      <div class="app run more"><svg width="24" height="20" viewBox="0 0 24 20"><path d="M5 0h19l-5 20H0z" fill="#2c67c7"/><path d="M8 4l6 6-8 6M12 16h6" fill="none" stroke="#fff" stroke-width="2.200"/></svg></div>
      <div class="app run"><svg width="24" height="24" viewBox="0 0 24 24"><path d="M6 3Q15-1 18 5q3 7-4 11" fill="none" stroke="#d03a1b" stroke-width="3.800"/><path d="M5 5q-1 6 4 8" fill="none" stroke="#b53217" stroke-width="2.500"/><path d="M13 2l-2 13M15 5v9" stroke="#ddd" stroke-width="2.200"/><g fill="none" stroke="#268ed8" stroke-width="2"><circle cx="7" cy="18" r="2.300"/><circle cx="13" cy="21" r="2.300"/></g></svg></div>
    </div>
    <div class="tray">
      <svg class="cloud" width="24" height="16" viewBox="0 0 24 16"><path d="M5 16a5 5 0 0 1 0-10A7 7 0 0 1 18 4.500 5.800 5.800 0 0 1 19 16z" fill="#b8d1f6"/><path d="M5 6A7 7 0 0 1 18 4.500q-6 0-6 5Q8 5 5 6z" fill="#719fe4"/></svg>
      <span class="weather">14°C&nbsp; Cloudy</span>
      <svg class="chev" width="12" height="8" viewBox="0 0 12 8"><path d="M.500 7L6 1.500 11.500 7" fill="none" stroke="#fff" stroke-width="1.300"/></svg>
      <svg width="16" height="16" viewBox="0 0 16 16"><rect x="3" y="4" width="8" height="8" rx="1" fill="none" stroke="#fff" stroke-width="1.200"/><path d="M11 7l3-2v6l-3-2M4 1.500Q8-.500 12 1.500M4 14.500q4 2 8 0" fill="none" stroke="#fff"/></svg>
      <svg width="18" height="16" viewBox="0 0 18 16"><path d="M1 2.500l15-1.500v8M1 2.500V13h8" fill="none" stroke="#fff" stroke-width="1.200"/><path d="M5 9q-1-4 3-4M11 5q1 4-3 4M8 3.500v3M8 7.500v3" fill="none" stroke="#fff"/><circle cx="13.500" cy="12.500" r="3.500" fill="#2f78c6"/></svg>
      <svg width="14" height="14" viewBox="0 0 14 14"><path d="M1 13A12 12 0 0 1 13 1.500M4 13a9 9 0 0 1 9-8M7 13a6 6 0 0 1 6-5" fill="none" stroke="#bbb" stroke-width="1.200"/><circle cx="11.500" cy="11.500" r="1.700" fill="#fff"/></svg>
      <svg width="17" height="14" viewBox="0 0 17 14"><path d="M1 5v4h2.500L7 12.500v-11L3.500 5zM9 4.500q1.800 2.500 0 5M11 3q3 4 0 8" fill="none" stroke="#fff"/><path d="M13.500 1q4 6 0 12" fill="none" stroke="#888"/></svg>
      <div class="clock"><span>17:17</span><span>30/05/2024</span></div>
      <svg class="note" width="28" height="26" viewBox="0 0 28 26"><path d="M1 1h17v13H9l-4 4v-4H1z" fill="#fff"/><path d="M4 4.500h11M4 7.500h11M4 10.500h7" stroke="#333"/><circle cx="16.500" cy="16.500" r="8" fill="#454545" stroke="#888"/><text x="16.500" y="20.500" text-anchor="middle">2</text></svg>
    </div>
  </footer>

  <div class="watermark"><div>Activate Windows</div><p>Go to Settings to activate Windows.</p></div>
</div>
</body>
</html>
```
FILE: styles.css
```css
* { box-sizing: border-box; }
body { margin: 0; font-family: "Open Sans", "Noto Sans", sans-serif; background: #f7f7f7; }
svg { display: block; flex: none; }
.screen { position: relative; width: 1920px; height: 1080px; overflow: hidden; display: flex; flex-direction: column; }

/* browser tabs */
.tabbar { height: 32px; flex: none; display: flex; align-items: center; background: #cdcdcd; position: relative; }
.avatar { margin-left: 11px; }
.workspaces { margin-left: 17px; margin-top: 1px; }
.tab-sep { width: 1px; height: 20px; background: #858585; margin-left: 19px; }
.tab { display: flex; align-items: center; height: 32px; width: 238px; padding: 0 10px; }
.tab-title { flex: 1; margin-left: 10px; font-size: 12px; letter-spacing: -.3px; color: #222; white-space: nowrap; }
.tab.active { background: #f7f7f7; border-radius: 8px 8px 0 0; width: 240px; padding: 0 11px; }
.tab.active .tab-title { letter-spacing: -.35px; }
.newtab { margin-left: 15px; }
.share-strip { position: absolute; left: 840px; top: 0; width: 242px; height: 1px; background: #ececec; border-left: 48px solid #0078d4; }
.win-controls { margin-left: auto; display: flex; gap: 34px; padding-right: 17px; }

/* toolbar */
.toolbar { height: 38px; flex: none; display: flex; align-items: center; background: #f7f7f7; }
.back { margin-left: 19px; }
.reload { margin-left: 26px; }
.address { margin-left: 19px; width: 1508px; height: 30px; border-radius: 15px; background: #fff; display: flex; align-items: center; padding: 0 16px 0 18px; box-shadow: 0 0 3px #e4e4e4; }
.url { flex: 1; margin-left: 14px; font-size: 14px; letter-spacing: -.36px; color: #777; }
.url b { font-weight: 400; color: #111; }
.address svg:last-child { margin-left: 23px; }
.tools { display: flex; gap: 26px; margin-left: 19px; }
.copilot { margin-left: 21px; }

/* page */
.middle { display: flex; height: 970px; flex: none; background: #f7f7f7; }
.page { margin-left: 4px; width: 1872px; height: 966px; border-radius: 8px; overflow: hidden; background: #1e1e1e; display: flex; flex-direction: column; box-shadow: 0 0 3px #aaa; }
.header { height: 72px; flex: none; background: #cc0000; display: grid; grid-template-columns: 1fr auto 1fr; align-items: center; }
.close { margin-left: 28px; }
.logo { grid-column: 2; }
.wide { font-family: "DejaVu Sans", sans-serif; font-weight: 700; fill: #fff; stroke: #fff; stroke-width: 2px; }
.wide.thin { stroke: #54585a; stroke-width: 1.5px; }
.wide.small { stroke-width: 1px; }
.reg { font-family: "Liberation Sans", sans-serif; fill: #fff; }
.body { display: flex; flex: 1; }
.nav { width: 312px; }
.nav-item { height: 60px; display: flex; align-items: center; gap: 12px; padding-left: 16px; background: #54585a; color: #fff; font-size: 18px; letter-spacing: -.6px; }
.nav-item.current { background: #394150; }
.grid { flex: 1; padding: 8px; display: grid; gap: 8px; grid-template-columns: repeat(6, 1fr); grid-template-rows: 639px 231px; }
.panel { grid-column: span 3; background: #54585a; border-radius: 6px; overflow: hidden; position: relative; }
.plant { border-radius: 6px; }
.chart text { font-family: "Liberation Sans", Arial, sans-serif; font-size: 12px; fill: #fff; stroke: #fff; stroke-width: .3px; }
.chart .ylab text { font-size: 11px; text-anchor: end; }
.chart .xlab text { text-anchor: middle; }
.tooltip { position: absolute; left: 233px; top: 136px; width: 184px; height: 59px; border-radius: 5px; border: 1px solid #e3e3e3; background: rgba(255, 255, 255, .96); box-shadow: 2px 2px 6px -4px #999; padding: 6px 8px; font-size: 14px; line-height: 20px; color: #111; white-space: nowrap; }
.tip-title { color: #00c5a2; font-weight: 700; font-size: 14px; letter-spacing: -.45px; margin-bottom: 6px; }
.tip-row { letter-spacing: -.13px; }
.tip-row b { font-weight: 600; color: #7d7d7d; letter-spacing: -.6px; }

/* cards */
.card { background: #54585a; border-radius: 6px; color: #fff; display: flex; flex-direction: column; align-items: center; padding-top: 72px; fill: #fff; }
.stopped { background: #c60000; }
.healthy { background: #0f9857; }
.card h2 { margin: 9px 0 0; font-size: 20px; line-height: 28px; font-weight: 700; letter-spacing: -.5px; }
.card p { margin: 0; font-size: 14px; line-height: 20px; letter-spacing: -.4px; }
.pie { padding-top: 39.5px; }

/* side strip */
.edge-bar { width: 44px; display: flex; flex-direction: column; align-items: center; gap: 20px; padding-top: 13px; }
.edge-bar hr { width: 28px; height: 1px; border: 0; margin: 1px 0 0; background: #c9c9c9; }
.edge-bar .add { position: relative; margin-top: 4px; }
.add i { position: absolute; right: -9px; top: -6px; width: 6px; height: 6px; border-radius: 50%; background: #e00000; }
.edge-bar hr.low { margin: auto 0 0; }
.gear { margin: -8px 0 12px; }

/* taskbar */
.taskbar { height: 40px; flex: none; display: flex; color: #fff; background: linear-gradient(90deg, #2a1c17 0, #221c17 300px, #22221d 370px, #474745 540px, #484848 600px, #484848); }
.start { width: 48px; display: flex; align-items: center; justify-content: center; }
.search { width: 288px; background: #f2f2f2; border: 1px solid #bdbdbd; display: flex; align-items: center; padding-left: 11px; color: #333; font-size: 15px; letter-spacing: -.5px; }
.search span { flex: 1; margin-left: 10px; }
.bird { align-self: flex-end; margin-right: 2px; }
.apps { display: flex; }
.app { width: 49px; height: 40px; display: flex; align-items: center; justify-content: center; }
.app.view { width: 50px; }
.app.on { background: #4b4e49; border-bottom: 2px solid #76b9ed; padding-top: 2px; }
.app.run { background: linear-gradient(#76b9ed, #76b9ed) center bottom / 40px 2px no-repeat; }
.app.run.more { background: linear-gradient(90deg, #76b9ed 31px, #45739b 31px) center bottom / 40px 2px no-repeat; }
.tray { margin-left: auto; display: flex; align-items: center; gap: 8px; padding-right: 4px; }
.weather { font-size: 14.5px; letter-spacing: -.4px; margin: 0 16px 0 0; }
.clock { width: 60px; margin-left: 2px; display: flex; flex-direction: column; align-items: center; font-size: 12px; line-height: 18px; letter-spacing: -.4px; }
.note { margin: 4px -2px 0 8px; }
.tray::after { content: ""; width: 1px; height: 40px; background: #777; }
.note text { font-size: 12px; font-weight: 600; fill: #fff; }

.watermark { position: absolute; left: 1599px; top: 944px; color: rgba(175, 175, 175, .6); white-space: nowrap; }
.watermark div { font-size: 20px; line-height: 28px; letter-spacing: -.4px; }
.watermark p { margin: -2px 0 0; font-size: 15px; line-height: 20px; letter-spacing: -.26px; }
```
